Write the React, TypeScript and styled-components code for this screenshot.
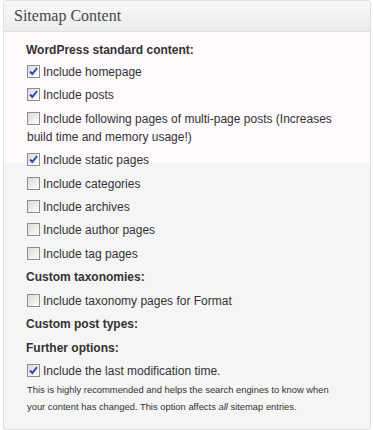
import React from 'react';
import styled, { createGlobalStyle } from 'styled-components';

const GlobalStyle = createGlobalStyle`
  html, body {
    margin: 0;
    padding: 0;
    background: #ffffff;
  }
  body {
    font-family: "Liberation Sans", Arial, sans-serif;
  }
`;

const Page = styled.div`
  padding: 0 2px 0 3px;
  width: 373px;
  box-sizing: border-box;
`;

const Postbox = styled.div`
  border: 1px solid #dfdfdf;
  border-radius: 3px;
  overflow: hidden;
  background: linear-gradient(to bottom, #fdf9fd 0, #fdf9fd 162px, #f5f5f5 162px);
`;

const Handle = styled.h3`
  margin: 0;
  height: 30px;
  padding: 0 10px;
  display: flex;
  align-items: center;
  font-family: "Liberation Serif", Georgia, serif;
  font-weight: normal;
  font-size: 16px;
  color: #464646;
  background: linear-gradient(to bottom, #f9f9f9, #ececec);
  border-bottom: 1px solid #dfdfdf;
`;

const Inside = styled.div`
  padding: 8.5px 22px 14px 22px;
  font-size: 12px;
  line-height: 18px;
  color: #333333;
`;

const Heading = styled.div<{ $first?: boolean }>`
  font-weight: bold;
  margin-bottom: ${(p) => (p.$first ? '4.5px' : '5.5px')};
  margin-top: ${(p) => (p.$first ? '0' : '1.6px')};
`;

const Options = styled.ul`
  list-style: none;
  margin: 0;
  padding: 0;
`;

const Option = styled.li<{ $tight?: boolean }>`
  margin: 0 0 ${(p) => (p.$tight ? '0' : '5.4px')} 1px;
`;

const Label = styled.label`
  cursor: pointer;
`;

const Box = styled.span`
  display: inline-block;
  box-sizing: border-box;
  width: 13px;
  height: 13px;
  margin: 0 3px 0 0;
  vertical-align: -2px;
  border: 1px solid #8f8f8f;
  background: linear-gradient(135deg, #d9d9d6 0%, #f4f4f2 70%, #ffffff 100%);
  position: relative;

  svg {
    position: absolute;
    left: 1px;
    top: 1px;
  }
`;

const Note = styled.div`
  margin: 0.5px 0 0 1px;
  font-size: 9.4px;
  line-height: 17px;
  color: #333333;
`;

const Checkbox: React.FC<{ checked?: boolean }> = ({ checked }) => (
  <Box>
    {checked && (
      <svg width="9" height="9" viewBox="0 0 9 9">
        <path d="M1 4.5 L3.3 7 L8 1.2" fill="none" stroke="#2a48b8" strokeWidth="1.9" />
      </svg>
    )}
  </Box>
);

const Item: React.FC<{ checked?: boolean; tight?: boolean; children: React.ReactNode }> = ({
  checked,
  tight,
  children,
}) => (
  <Option $tight={tight}>
    <Label>
      <Checkbox checked={checked} />
      {children}
    </Label>
  </Option>
);

export default function App() {
  return (
    <>
      <GlobalStyle />
      <Page>
        <Postbox>
          <Handle>Sitemap Content</Handle>
          <Inside>
            <Heading $first>WordPress standard content:</Heading>
            <Options>
              <Item checked>Include homepage</Item>
              <Item checked>Include posts</Item>
              <Item>
                Include following pages of multi-page posts (Increases build time and memory usage!)
              </Item>
              <Item checked>Include static pages</Item>
              <Item>Include categories</Item>
              <Item>Include archives</Item>
              <Item>Include author pages</Item>
              <Item>Include tag pages</Item>
            </Options>

            <Heading>Custom taxonomies:</Heading>
            <Options>
              <Item>Include taxonomy pages for Format</Item>
            </Options>

            <Heading>Custom post types:</Heading>

            <Heading>Further options:</Heading>
            <Options>
              <Item checked tight>
                Include the last modification time.
              </Item>
            </Options>
            <Note>
              This is highly recommended and helps the search engines to know when your content has
              changed. This option affects <i>all</i> sitemap entries.
            </Note>
          </Inside>
        </Postbox>
      </Page>
    </>
  );
}
